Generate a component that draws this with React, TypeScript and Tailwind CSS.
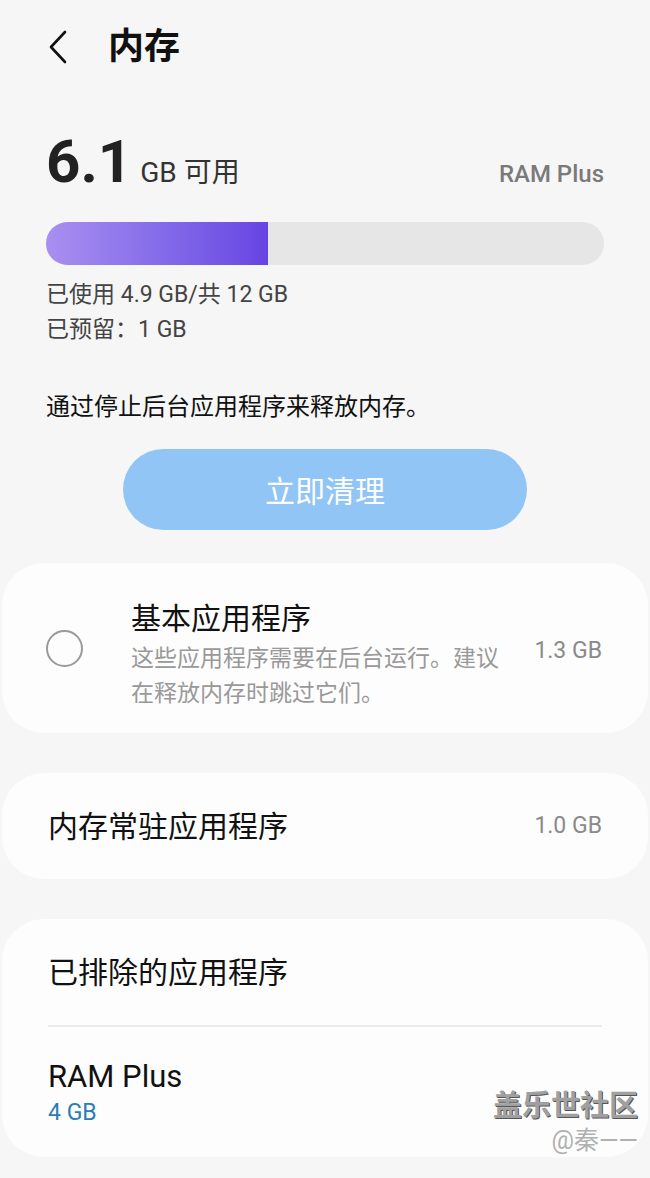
import React from "react";

const font = { fontFamily: "Roboto, 'Noto Sans CJK SC', sans-serif" };

const Card: React.FC<{ className?: string; children: React.ReactNode }> = ({ className = "", children }) => (
  <div className={`mx-[2px] rounded-[42px] bg-[#fdfdfd] ${className}`}>{children}</div>
);

export default function App() {
  return (
    <div style={font} className="w-[650px] h-[1178px] bg-[#f6f6f6] text-[#111] overflow-hidden relative">
      {/* header */}
      <div className="flex items-center h-[94px] pl-[46px]">
        <svg width="24" height="36" viewBox="0 0 24 36" className="mr-[38px]">
          <path d="M19 3 L5 18 L19 33" fill="none" stroke="#111" strokeWidth="2.6" strokeLinecap="round" strokeLinejoin="round" />
        </svg>
        <span className="text-[36px] font-bold">内存</span>
      </div>

      {/* summary */}
      <div className="px-[46px] pt-[38px]">
        <div className="flex items-end justify-between">
          <div className="flex items-baseline">
            <span className="text-[60px] font-bold leading-[60px] text-[#222]">6.1</span>
            <span className="ml-[8px] text-[28px] text-[#333]">GB 可用</span>
          </div>
          <span className="text-[24px] font-medium text-[#7a7a7a] mb-[2px]">RAM Plus</span>
        </div>
        <div className="mt-[28px] h-[43px] rounded-full bg-[#e6e6e6] overflow-hidden">
          <div className="h-full w-[222px] bg-gradient-to-r from-[#a98ff0] to-[#6744e2]" />
        </div>
        <div className="mt-[12px] text-[23px] leading-[35px] text-[#444]">
          <div>已使用 4.9 GB/共 12 GB</div>
          <div>已预留：1 GB</div>
        </div>
        <div className="mt-[44px] text-[24px] leading-[32px] text-[#111]">通过停止后台应用程序来释放内存。</div>
      </div>

      <div className="flex justify-center mt-[26px]">
        <div className="w-[404px] h-[81px] rounded-full bg-[#91c5f5] flex items-center justify-center text-[30px] text-white pt-[4px]">
          立即清理
        </div>
      </div>

      {/* cards */}
      <div className="mt-[33px] flex flex-col gap-[40px]">
        <Card className="h-[170px] flex items-center pl-[44px] pr-[46px]">
          <div className="w-[37px] h-[37px] rounded-full border-2 border-[#9a9a9a] shrink-0" />
          <div className="ml-[48px] mt-[14px] flex-1">
            <div className="text-[30px] leading-[40px] text-[#111]">基本应用程序</div>
            <div className="mt-[2px] text-[23px] leading-[35px] text-[#999] w-[375px]">
              这些应用程序需要在后台运行。建议在释放内存时跳过它们。
            </div>
          </div>
          <span className="text-[23px] text-[#8a8a8a] mt-[6px]">1.3 GB</span>
        </Card>

        <Card className="h-[106px] flex items-center justify-between px-[46px]">
          <span className="text-[30px] text-[#111]">内存常驻应用程序</span>
          <span className="text-[23px] text-[#8a8a8a]">1.0 GB</span>
        </Card>

        <Card className="h-[238px] px-[46px]">
          <div className="h-[106px] flex items-center text-[30px] text-[#111]">已排除的应用程序</div>
          <div className="h-[2px] bg-[#ececec]" />
          <div className="pt-[30px]">
            <div className="text-[31px] leading-[40px] text-[#111]">RAM Plus</div>
            <div className="text-[23px] leading-[32px] text-[#2b7db4]">4 GB</div>
          </div>
        </Card>
      </div>

      {/* watermark */}
      <div className="absolute right-[12px] top-[1088px] flex flex-col items-end">
        <span className="text-[29px] font-bold leading-[36px] text-[#a0a0a0] [text-shadow:1px_1px_0_#555]">盖乐世社区</span>
        <span className="mt-[2px] text-[25px] leading-[30px] text-[#b0b0b0]">@秦——</span>
      </div>
    </div>
  );
}
